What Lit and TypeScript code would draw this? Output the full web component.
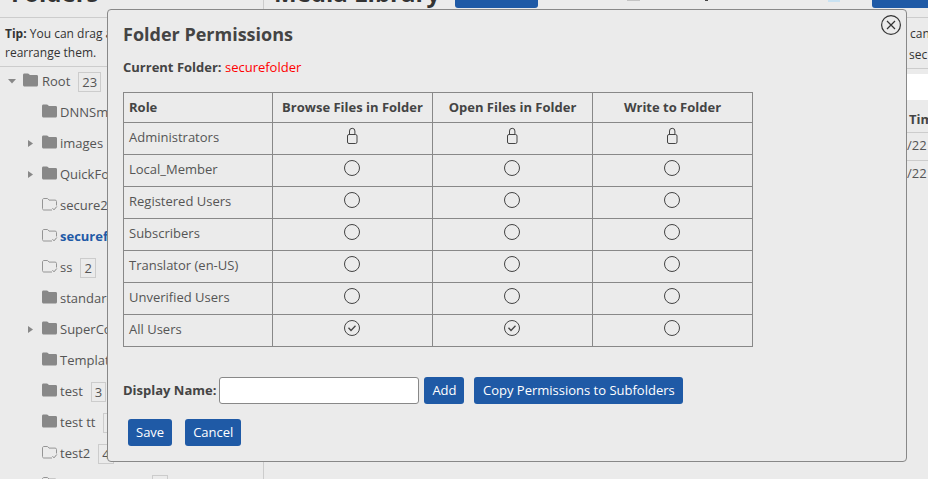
import { LitElement, html, css } from "lit";
import { customElement } from "lit/decorators.js";

const folderIcon = html`<svg class="ficon" viewBox="0 0 17 17"><path d="M0 4C0 3.200.6 2.500 1.400 2.500h3.400c.5 0 .9.2 1.200.6l.8 1h6.800c.9 0 1.400.6 1.400 1.400v8.500c0 .9-.6 1.500-1.400 1.500H1.600C.7 15.500 0 14.900 0 14z" fill="#888"/></svg>`;
const secureIcon = html`<svg class="ficon" viewBox="0 0 17 17" fill="none" stroke="#959595" stroke-width="1"><path d="M10 15H1.900C1 15 .5 14.400.5 13.500V5C.5 4.200 1 3.500 1.900 3.500h3.200c.5 0 .8.200 1.100.6l.8 1h6.100c.9 0 1.400.5 1.400 1.400v4"/><path d="M10.500 13.200l1.500 1.600 2.800-3.300" stroke="#888"/></svg>`;
const lockIcon = html`<svg class="cicon" viewBox="0 0 18 18" fill="none" stroke="#444" stroke-width="1"><rect x="4.500" y="7.500" width="9.500" height="9" rx="1.500"/><path d="M6.500 7.500V4a2.700 2.700 0 0 1 5.400 0v3.500"/></svg>`;
const radioIcon = html`<svg class="cicon" viewBox="0 0 18 18" fill="none" stroke="#444" stroke-width="1"><circle cx="9" cy="9" r="7.500"/></svg>`;
const checkIcon = html`<svg class="cicon" viewBox="0 0 18 18" fill="none" stroke="#444" stroke-width="1"><circle cx="9" cy="9" r="7.500"/><path d="M5.500 8.800l2.500 2.700 4.500-4.800" stroke-width="1.300"/></svg>`;

type Node = { name: string; indent: 0 | 1; arrow?: "open" | "closed"; secure?: boolean; count?: string; active?: boolean };
const tree: Node[] = [
  { name: "Root", indent: 0, arrow: "open", count: "23" },
  { name: "DNNSmiley", indent: 1 },
  { name: "images", indent: 1, arrow: "closed" },
  { name: "QuickFolder", indent: 1, arrow: "closed" },
  { name: "secure2", indent: 1, secure: true },
  { name: "securefolder", indent: 1, secure: true, active: true },
  { name: "ss", indent: 1, secure: true, count: "2" },
  { name: "standard", indent: 1 },
  { name: "SuperContent", indent: 1, arrow: "closed" },
  { name: "Templates", indent: 1 },
  { name: "test", indent: 1, count: "3" },
  { name: "test tt", indent: 1, count: "1" },
  { name: "test2", indent: 1, secure: true, count: "4" },
  { name: "testfolder 123", indent: 1, secure: true, count: "5" },
];

const roles: [string, string, string, string][] = [
  ["Administrators", "lock", "lock", "lock"],
  ["Local_Member", "radio", "radio", "radio"],
  ["Registered Users", "radio", "radio", "radio"],
  ["Subscribers", "radio", "radio", "radio"],
  ["Translator (en-US)", "radio", "radio", "radio"],
  ["Unverified Users", "radio", "radio", "radio"],
  ["All Users", "check", "check", "radio"],
];
const icons: Record<string, unknown> = { lock: lockIcon, radio: radioIcon, check: checkIcon };

@customElement("app-root")
export class AppRoot extends LitElement {
  static styles = css`
    :host {
      display: block;
      position: relative;
      width: 928px;
      height: 479px;
      overflow: hidden;
      background: #ebebeb;
      font-family: "Open Sans", sans-serif;
      font-size: 13px;
      color: #555;
    }
    .page {
      display: grid;
      grid-template-columns: 264px 1fr;
      height: 479px;
      overflow: hidden;
    }
    .left {
      border-right: 1px solid #ccc;
      overflow: hidden;
    }
    .head {
      height: 17px;
      border-bottom: 1px solid #ccc;
      overflow: hidden;
      padding-left: 11px;
    }
    h1 {
      margin: -25px 0 0;
      font-size: 24px;
      line-height: 36px;
      font-weight: 700;
      color: #333;
      flex: none;
    }
    .tip {
      padding: 6px 5px 0;
      height: 42px;
      line-height: 19px;
      font-size: 12px;
      border-bottom: 1px solid #ccc;
      color: #333;
    }
    .tree {
      list-style: none;
      margin: -2px 0 0;
      padding: 0;
    }
    .tree li {
      height: 31px;
      display: flex;
      align-items: center;
      white-space: nowrap;
      font-size: 13px;
    }
    .tree .i0 { padding-left: 8px; }
    .tree .i0 .name { margin-left: 1px; }
    .tree .i1 { padding-left: 27px; }
    .arrow {
      width: 15px;
      flex: none;
      display: flex;
      justify-content: flex-start;
    }
    .arrow svg { width: 9px; height: 9px; }
    .ficon { width: 17px; height: 17px; flex: none; margin-right: 1px; margin-top: -3px; }
    .name.active { color: #1f5aa6; font-weight: 700; }
    .count {
      margin-left: 8px;
      border: 1px solid #ccc;
      padding: 0 3px;
      line-height: 18px;
      font-size: 13px;
      margin-top: 2px;
    }
    .right {
      display: grid;
      grid-template-columns: 1fr 23px;
      grid-template-rows: 18px 1fr;
      overflow: hidden;
    }
    .rhead {
      grid-column: 1 / 3;
      display: flex;
      align-items: flex-start;
      overflow: hidden;
      height: 17px;
      padding-left: 10px;
      border-bottom: 1px solid #ccc;
    }
    .rhead button {
      margin-top: -21px;
      height: 29px;
      padding-bottom: 4px;
      flex: none;
    }
    .rhead .upload {
      margin-left: 15px;
      width: 83px;
      padding: 0 0 4px;
      display: flex;
      align-items: center;
      justify-content: center;
      gap: 4px;
    }
    .upload i {
      width: 15px;
      height: 12px;
      background: #fff;
      margin-top: -1px;
      display: block;
    }
    .muted {
      flex: none;
      width: 13px;
      height: 1px;
      background: #c4c4c4;
      margin-left: 89px;
    }
    .dark {
      flex: none;
      width: 3px;
      height: 1px;
      background: #444;
      margin-left: 65px;
    }
    .thumb {
      margin-left: 120px;
      width: 12px;
      height: 2px;
      background: #c9e2f2;
      flex: none;
    }
    .rhead .apply {
      margin-left: auto;
      width: 56px;
      padding: 0 0 4px;
      border-radius: 3px 0 0 3px;
    }
    .grow { grid-column: 1; }
    .side {
      grid-column: 2;
      display: flex;
      flex-direction: column;
      font-size: 12px;
      color: #555;
      overflow: hidden;
      white-space: nowrap;
    }
    .sidetip {
      height: 45px;
      padding-top: 5px;
      line-height: 21px;
      border-bottom: 1px solid #ccc;
      color: #333;
    }
    .sidetip span { display: block; padding-left: 5px; }
    .sidetip span + span { padding-left: 4px; }
    .search {
      height: 26px;
      margin-top: 5px;
      background: #fff;
      flex: none;
    }
    .th {
      height: 32px;
      line-height: 38px;
      font-weight: 700;
      font-size: 13px;
      padding-left: 4px;
      border-bottom: 1px solid #ccc;
      flex: none;
      color: #444;
    }
    .td {
      height: 27px;
      line-height: 24px;
      font-size: 13px;
      padding-left: 2px;
      border-bottom: 1px solid #ccc;
      flex: none;
    }
    .td.last { border-bottom: 0; }
    .modal {
      position: absolute;
      left: 107px;
      top: 9px;
      width: 768px;
      height: 451px;
      background: #ebebeb;
      border: 1px solid #888;
      border-radius: 4px;
      padding: 0 15px;
    }
    .close {
      position: absolute;
      right: 5px;
      top: 5px;
      width: 20px;
      height: 20px;
      display: block;
    }
    h2 {
      margin: 12px 0 0;
      font-size: 18px;
      line-height: 25px;
      font-weight: 700;
      color: #444;
    }
    .current {
      margin: 11px 0 0;
      font-size: 13px;
      line-height: 18px;
      font-weight: 700;
      color: #444;
    }
    .current span { color: #f00; font-weight: 400; }
    table {
      margin-top: 16px;
      border-collapse: collapse;
      width: 630px;
      table-layout: fixed;
    }
    th, td {
      border: 1px solid #888;
      padding: 0 5px;
      font-size: 13px;
      text-align: center;
    }
    thead th { height: 27px; padding-bottom: 2px; color: #444; }
    col.c0 { width: 149px; }
    col.cn { width: 160px; }
    th.role, td.role { text-align: left; }
    td.role { padding-bottom: 4px; height: 27px; }
    td.cell { padding: 0 6px 0 4px; height: 31px; }
    .cicon { width: 18px; height: 18px; display: block; margin: -6px auto 0; }
    .form {
      margin-top: 30px;
      display: flex;
      align-items: center;
      height: 27px;
    }
    label { font-weight: 700; font-size: 13px; margin-right: 3px; margin-bottom: 2px; color: #444; }
    input {
      width: 200px;
      height: 27px;
      box-sizing: border-box;
      border: 1px solid #888;
      border-radius: 3px;
      background: #fff;
      margin: 0 5px 0 0;
      padding: 0 4px;
    }
    button {
      height: 27px;
      background: #1f5aa6;
      color: #fff;
      border: 0;
      border-radius: 3px;
      font-family: inherit;
      font-size: 13px;
      font-weight: 400;
      padding: 0 8px 2px;
      margin: 0;
    }
    .add { width: 40px; padding: 0 0 2px; }
    .copy { padding: 0 8.500px 2px; margin-left: 10px; }
    .actions {
      margin: 15px 0 0 5px;
      display: flex;
      gap: 13px;
    }
  `;

  private renderNode(n: Node) {
    const arrow = n.arrow === "open"
      ? html`<svg viewBox="0 0 9 9"><path d="M0 3h8L4 7.500z" fill="#888"/></svg>`
      : n.arrow === "closed"
        ? html`<svg viewBox="0 0 9 9"><path d="M1 2v7l5-3.500z" fill="#888"/></svg>`
        : "";
    return html`<li class="i${n.indent}">
      <span class="arrow">${arrow}</span>
      ${n.secure ? secureIcon : folderIcon}
      <span class="name ${n.active ? "active" : ""}">${n.name}</span>
      ${n.count ? html`<span class="count">${n.count}</span>` : ""}
    </li>`;
  }

  render() {
    return html`
      <div class="page">
        <section class="left">
          <div class="head"><h1>Folders</h1></div>
          <div class="tip"><b>Tip:</b> You can drag and drop folders to rearrange them.</div>
          <ul class="tree">${tree.map((n) => this.renderNode(n))}</ul>
        </section>
        <section class="right">
          <div class="rhead">
            <h1>Media Library</h1>
            <button class="upload"><i></i>Upload</button>
            <div class="muted"></div>
            <div class="dark"></div>
            <div class="thumb"></div>
            <button class="apply">Apply</button>
          </div>
          <div class="grow"></div>
          <div class="side">
            <div class="sidetip"><span>can</span><span>sec</span></div>
            <div class="search"></div>
            <div class="th">Time</div>
            <div class="td">/22</div>
            <div class="td last">/22</div>
          </div>
        </section>
      </div>
      <div class="modal">
        <svg class="close" viewBox="0 0 20 20" fill="none" stroke="#333" stroke-width="1.200">
          <circle cx="10" cy="10" r="9.400"/>
          <path d="M6 6l8 8M14 6l-8 8"/>
        </svg>
        <h2>Folder Permissions</h2>
        <p class="current">Current Folder: <span>securefolder</span></p>
        <table>
          <colgroup><col class="c0" /><col class="cn" /><col class="cn" /><col class="cn" /></colgroup>
          <thead>
            <tr>
              <th class="role">Role</th>
              <th>Browse Files in Folder</th>
              <th>Open Files in Folder</th>
              <th>Write to Folder</th>
            </tr>
          </thead>
          <tbody>
            ${roles.map((r) => html`<tr>
              <td class="role">${r[0]}</td>
              <td class="cell">${icons[r[1]]}</td>
              <td class="cell">${icons[r[2]]}</td>
              <td class="cell">${icons[r[3]]}</td>
            </tr>`)}
          </tbody>
        </table>
        <div class="form">
          <label for="dn">Display Name:</label>
          <input id="dn" type="text" />
          <button class="add">Add</button>
          <button class="copy">Copy Permissions to Subfolders</button>
        </div>
        <div class="actions">
          <button>Save</button>
          <button>Cancel</button>
        </div>
      </div>
    `;
  }
}
